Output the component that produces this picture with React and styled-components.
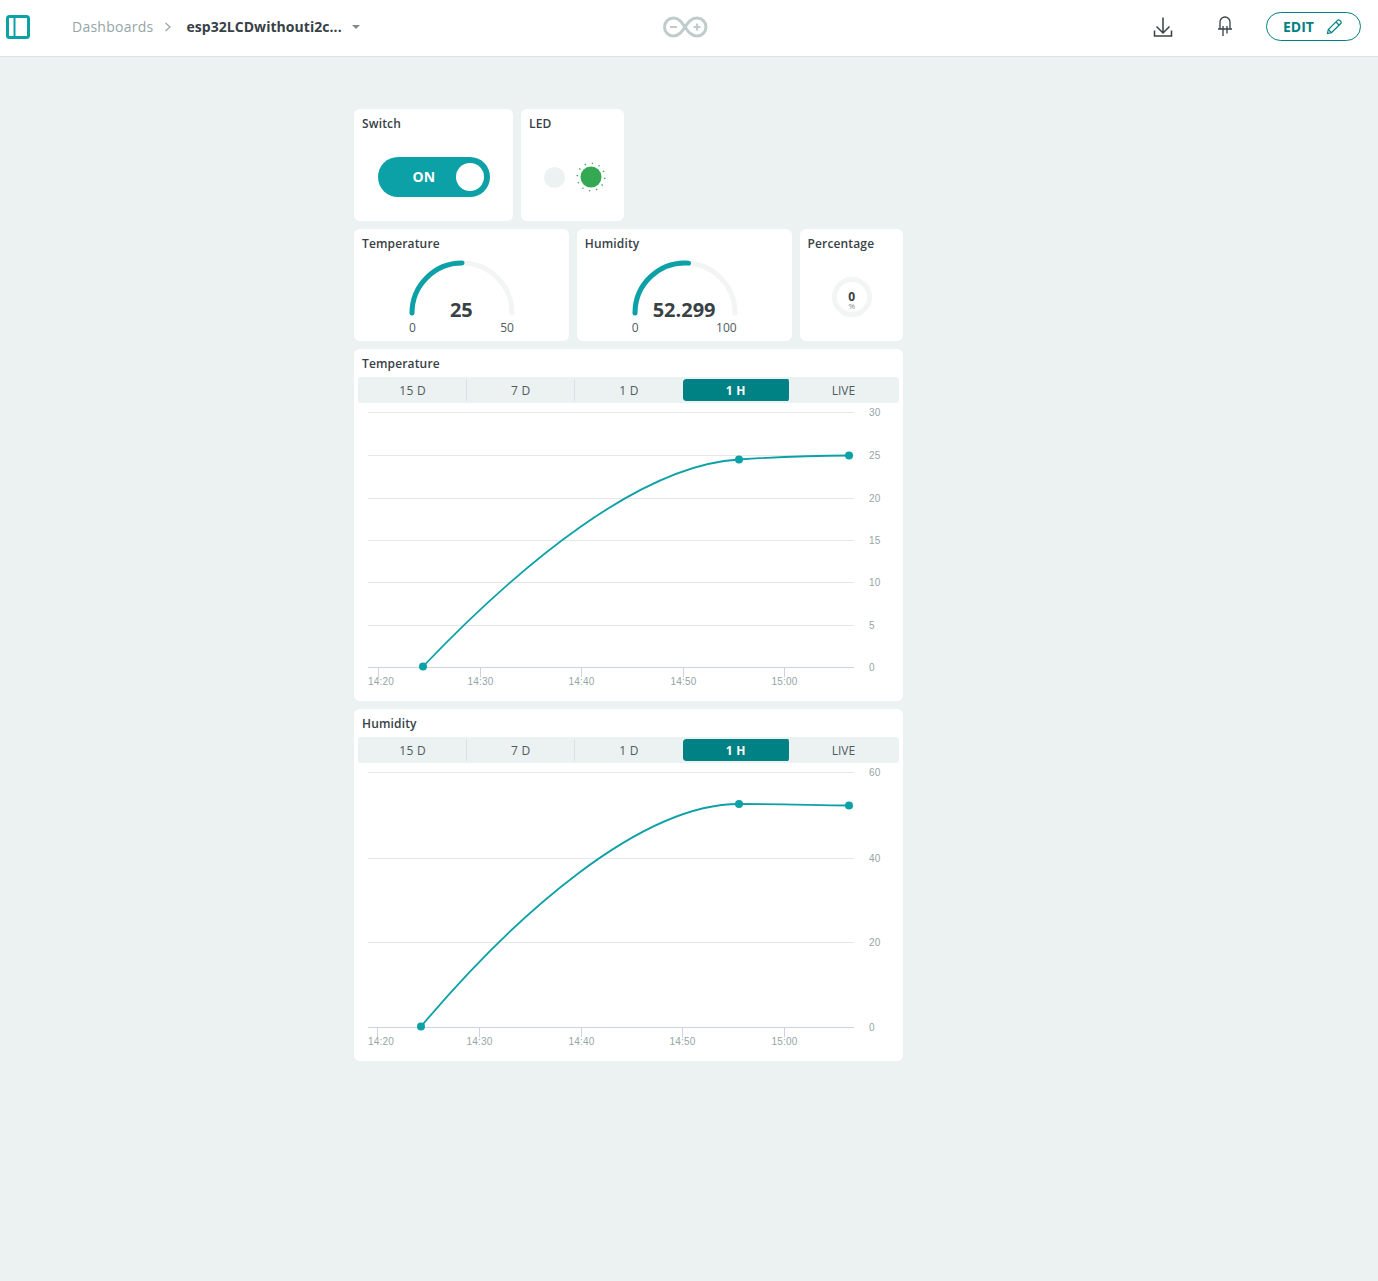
import styled, { createGlobalStyle } from "styled-components";

const teal = "#0ca1a6";
const darkTeal = "#008184";

const GlobalStyle = createGlobalStyle`
    html, body {
        margin: 0;
        padding: 0;
        background: #ecf1f1;
        font-family: "Open Sans", sans-serif;
        color: #374146;
    }
`;

const Page = styled.div`
    min-height: 1281px;
    overflow: hidden;
`;

const Header = styled.header`
    display: grid;
    grid-template-columns: 1fr auto 1fr;
    align-items: center;
    box-sizing: border-box;
    height: 57px;
    background: #fff;
    border-bottom: 1px solid #dae3e3;
    padding: 0 17px 3px 6px;
`;

const HeaderLeft = styled.div`
    display: flex;
    align-items: center;
`;

const Crumb = styled.span`
    margin-left: 42px;
    font-size: 14px;
    letter-spacing: 0.25px;
    color: #95a5a6;
`;

const CrumbCurrent = styled.span`
    margin-left: 14px;
    font-size: 14px;
    font-weight: 700;
    letter-spacing: 0.05px;
    color: #374146;
`;

const HeaderRight = styled.div`
    display: flex;
    align-items: center;
    justify-content: flex-end;
`;

const EditButton = styled.button`
    display: flex;
    align-items: center;
    justify-content: center;
    gap: 12px;
    width: 95px;
    height: 29px;
    margin-left: 33px;
    padding: 0 2px 0 0;
    background: #fff;
    border: 1px solid ${darkTeal};
    border-radius: 15px;
    color: ${darkTeal};
    font-family: inherit;
    font-size: 14px;
    font-weight: 700;
`;

const Board = styled.main`
    display: grid;
    grid-template-columns: repeat(10, 47.7px);
    grid-auto-rows: 112px;
    gap: 8px;
    padding: 52px 0 0 354px;
`;

const Card = styled.section`
    grid-column: span ${(p) => p.$cols};
    grid-row: span ${(p) => p.$rows || 1};
    position: relative;
    background: #fff;
    border-radius: 6px;
    padding: 7px 4px 0;
    display: flex;
    flex-direction: column;
    min-width: 0;
`;

const Spacer = styled.div`
    grid-column: span ${(p) => p.$cols};
`;

const Title = styled.h3`
    margin: 0 0 0 4px;
    font-size: 12px;
    line-height: 16px;
    font-weight: 600;
    letter-spacing: 0.15px;
    color: #374146;
`;

const Center = styled.div`
    flex: 1;
    display: flex;
    align-items: center;
    justify-content: center;
    padding-bottom: 16px;
`;

const Switch = styled.div`
    position: relative;
    width: 112px;
    height: 40px;
    margin: 17px 0 0 1px;
    border-radius: 20px;
    background: ${teal};
    color: #fff;
    font-size: 14px;
    font-weight: 700;
    line-height: 40px;
    padding-left: 34.5px;
    box-sizing: border-box;
`;

const Knob = styled.span`
    position: absolute;
    top: 6px;
    right: 6px;
    width: 28px;
    height: 28px;
    border-radius: 50%;
    background: #fff;
`;

const LedRow = styled.div`
    display: flex;
    align-items: center;
    gap: 6px;
    margin: 17px 0 0 5px;
`;

const LedOff = styled.span`
    width: 21px;
    height: 21px;
    margin-right: 5px;
    border-radius: 50%;
    background: #ecf1f1;
`;

const GaugeBox = styled.div`
    position: relative;
    width: 110px;
    height: 60px;
    margin: 8px auto 0;
`;

const GaugeValue = styled.div`
    position: absolute;
    left: 0;
    right: 0;
    top: 37px;
    text-align: center;
    font-size: 20px;
    line-height: 26px;
    font-weight: 700;
    color: #374146;
`;

const GaugeScale = styled.div`
    display: flex;
    justify-content: space-between;
    width: 105px;
    margin: 0 auto;
    font-size: 12px;
    line-height: 16px;
    color: #4e5b61;
`;

const Ring = styled.div`
    width: 30px;
    height: 30px;
    margin: 17px 0 0 1px;
    border: 5px solid #f3f4f4;
    border-radius: 50%;
    display: flex;
    flex-direction: column;
    align-items: center;
    justify-content: center;
`;

const RingValue = styled.span`
    font-size: 12px;
    line-height: 11px;
    font-weight: 700;
    margin-top: 6px;
`;

const RingUnit = styled.span`
    font-size: 8px;
    line-height: 8px;
    color: #7f8c8d;
`;

const Tabs = styled.div`
    display: flex;
    align-items: center;
    width: 541px;
    height: 26px;
    margin-top: 5px;
    border-radius: 3px;
    background: #ecf1f1;
`;

const Tab = styled.div`
    flex: 0 0 20%;
    height: 22px;
    line-height: 23px;
    text-align: center;
    font-size: 12px;
    letter-spacing: 0.3px;
    box-sizing: border-box;
    font-weight: ${(p) => (p.$active ? 700 : 400)};
    color: ${(p) => (p.$active ? "#fff" : "#4e5b61")};
    background: ${(p) => (p.$active ? darkTeal : "transparent")};
    background-clip: padding-box;
    border-radius: ${(p) => (p.$active ? "3px" : "0")};
    border-left: ${(p) => (p.$active ? "0" : `1px solid ${p.$line ? "#dae3e3" : "transparent"}`)};
    border-right: ${(p) => (p.$active ? "2px solid transparent" : "0")};

    &:last-child {
        padding-right: 4px;
        letter-spacing: 0;
    }
`;

const ChartSvg = styled.svg`
    display: block;
    width: 541px;
    height: 298px;
`;

const AxisText = styled.text`
    font-family: "Liberation Sans", Arial, sans-serif;
    font-size: 10px;
    letter-spacing: 0.2px;
    fill: #95a5a6;
`;

function SidebarIcon() {
    return (
        <svg width="24" height="24" viewBox="0 0 24 24" fill="none" stroke={teal}>
            <rect x="1.5" y="1.5" width="21" height="21" rx="2" strokeWidth="3" />
            <path d="M8.5 2v20" strokeWidth="2" />
        </svg>
    );
}

function Chevron() {
    return (
        <svg width="8" height="10" viewBox="0 0 8 10" fill="none" stroke="#95a5a6" strokeWidth="1.2" style={{ marginLeft: 11 }}>
            <path d="M1.5 1l4.5 4-4.5 4" />
        </svg>
    );
}

function Caret() {
    return (
        <svg width="8" height="4" viewBox="0 0 8 4" fill="#7f8c8d" style={{ marginLeft: 10 }}>
            <path d="M0 0h8L4 4z" />
        </svg>
    );
}

function ArduinoLogo() {
    return (
        <svg width="47" height="22" viewBox="0 0 47 22" fill="none" stroke="#c0cbcb" style={{ display: "block", marginLeft: 3 }}>
            <path
                d="M23 11C20 6.500 17 2 11.500 2 6.500 2 2.500 6 2.500 11s4 9 9 9c5.500 0 8.500-4.500 11.500-9 3-4.500 6-9 12-9 5 0 9 4 9 9s-4 9-9 9c-6 0-9-4.500-12-9z"
                strokeWidth="3"
            />
            <path d="M8 11h7M31.500 11h7M35 7.500v7" strokeWidth="2.200" />
        </svg>
    );
}

function DownloadIcon() {
    return (
        <svg width="20" height="20" viewBox="0 0 20 20" fill="none" stroke="#374146" strokeWidth="1.5">
            <path d="M10 .5V16M3.500 9.500L10 16l6.500-6.500M1.500 13.500V19h17v-5.500" />
        </svg>
    );
}

function LedIcon() {
    return (
        <svg width="16" height="21" viewBox="0 0 16 21" fill="none" stroke="#374146" strokeWidth="1.3" style={{ marginLeft: 44 }}>
            <path d="M3 13V6a5 5 0 0 1 10 0v7M1 13h14M6 10v10M10 10v7.500" />
        </svg>
    );
}

function PencilIcon() {
    return (
        <svg width="16" height="16" viewBox="0 0 16 16" fill="none" stroke={darkTeal} strokeWidth="1.2">
            <path d="M1.500 14.500l.8-4L11.500 1.300a1.500 1.500 0 0 1 2.100 0l1.100 1.100a1.500 1.500 0 0 1 0 2.100L5.500 13.700z" />
            <path d="M10 3l3 3M2.300 10.500l3.200 3.200" />
        </svg>
    );
}

function LedOn() {
    const rays = Array.from({ length: 12 }, (_, i) => (i * Math.PI) / 6 + 0.1);
    return (
        <svg width="30" height="30" viewBox="0 0 30 30">
            <circle cx="15" cy="15" r="10.500" fill="#34a853" />
            {rays.map((a, i) => (
                <line
                    key={i}
                    x1={15 + Math.cos(a) * 13}
                    y1={15 + Math.sin(a) * 13}
                    x2={15 + Math.cos(a) * 14.5}
                    y2={15 + Math.sin(a) * 14.5}
                    stroke="#34a853"
                    strokeWidth="1.2"
                />
            ))}
        </svg>
    );
}

function Gauge({ value, max }) {
    const r = 50;
    const cx = 56;
    const cy = 53;
    const angle = Math.PI - (value / max) * Math.PI;
    const ex = cx + r * Math.cos(angle);
    const ey = cy - r * Math.sin(angle);
    return (
        <>
            <GaugeBox>
                <svg width="110" height="60" viewBox="0 0 110 60" fill="none" strokeWidth="5" strokeLinecap="round">
                    <path d={`M${cx - r} ${cy}A${r} ${r} 0 0 1 ${cx + r} ${cy}`} stroke="#f3f4f4" />
                    <path d={`M${cx - r} ${cy}A${r} ${r} 0 0 1 ${ex} ${ey}`} stroke={teal} />
                </svg>
                <GaugeValue>{value}</GaugeValue>
            </GaugeBox>
            <GaugeScale>
                <span>0</span>
                <span>{max}</span>
            </GaugeScale>
        </>
    );
}

function Chart({ top, grid, ticks, curve, points }) {
    // viewBox uses page coordinates so the plot numbers read straight off the screenshot
    const base = grid[grid.length - 1][1];
    return (
        <ChartSvg viewBox={`358 ${top} 541 298`} fill="none">
            {grid.map(([label, y], i) => (
                <g key={label}>
                    <line x1="368" x2="854" y1={y} y2={y} stroke={i === grid.length - 1 ? "#ccd4e4" : "#e6e8e8"} />
                    <AxisText x="869" y={y + 3}>{label}</AxisText>
                </g>
            ))}
            {ticks.map(([label, x], i) => (
                <g key={label}>
                    <line x1={x} x2={x} y1={base} y2={base + 10} stroke="#ccd4e4" />
                    <AxisText x={i === 0 ? 368 : x} y={base + 17} textAnchor={i === 0 ? "start" : "middle"}>{label}</AxisText>
                </g>
            ))}
            <path d={curve} stroke={teal} strokeWidth="1.8" />
            {points.map(([x, y]) => (
                <circle key={x} cx={x} cy={y} r="4" fill={teal} />
            ))}
        </ChartSvg>
    );
}

const tabs = ["15 D", "7 D", "1 D", "1 H", "LIVE"];

function ChartCard({ title, ...chart }) {
    return (
        <Card $cols={10} $rows={3}>
            <Title>{title}</Title>
            <Tabs>
                {tabs.map((t, i) => (
                    <Tab key={t} $active={t === "1 H"} $line={i === 1 || i === 2}>{t}</Tab>
                ))}
            </Tabs>
            <Chart {...chart} />
        </Card>
    );
}

export default function App() {
    return (
        <Page>
            <GlobalStyle />
            <Header>
                <HeaderLeft>
                    <SidebarIcon />
                    <Crumb>Dashboards</Crumb>
                    <Chevron />
                    <CrumbCurrent>esp32LCDwithouti2c...</CrumbCurrent>
                    <Caret />
                </HeaderLeft>
                <ArduinoLogo />
                <HeaderRight>
                    <DownloadIcon />
                    <LedIcon />
                    <EditButton>
                        EDIT
                        <PencilIcon />
                    </EditButton>
                </HeaderRight>
            </Header>
            <Board>
                <Card $cols={3}>
                    <Title>Switch</Title>
                    <Center>
                        <Switch>ON<Knob /></Switch>
                    </Center>
                </Card>
                <Card $cols={2}>
                    <Title>LED</Title>
                    <Center>
                        <LedRow>
                            <LedOff />
                            <LedOn />
                        </LedRow>
                    </Center>
                </Card>
                <Spacer $cols={5} />
                <Card $cols={4}>
                    <Title>Temperature</Title>
                    <Gauge value={25} max={50} />
                </Card>
                <Card $cols={4}>
                    <Title>Humidity</Title>
                    <Gauge value={52.299} max={100} />
                </Card>
                <Card $cols={2}>
                    <Title>Percentage</Title>
                    <Center>
                        <Ring>
                            <RingValue>0</RingValue>
                            <RingUnit>%</RingUnit>
                        </Ring>
                    </Center>
                </Card>
                <ChartCard
                    title="Temperature"
                    top={403}
                    grid={[["30", 412.5], ["25", 455.5], ["20", 498.5], ["15", 540.5], ["10", 582.5], ["5", 625.5], ["0", 667.5]]}
                    ticks={[["14:20", 378.5], ["14:30", 480.5], ["14:40", 581.5], ["14:50", 683.5], ["15:00", 784.5]]}
                    curve="M423 666.500C520 565 640 465 739 459.500C775 457 810 455.500 849 455.500"
                    points={[[423, 666.5], [739, 459.5], [849, 455.5]]}
                />
                <ChartCard
                    title="Humidity"
                    top={763}
                    grid={[["60", 772.5], ["40", 858.5], ["20", 942.5], ["0", 1027.5]]}
                    ticks={[["14:20", 377.5], ["14:30", 479.5], ["14:40", 581.5], ["14:50", 682.5], ["15:00", 784.5]]}
                    curve="M421 1026.500C515 915 640 804 739 804C775 804 810 805 849 805.500"
                    points={[[421, 1026.5], [739, 804], [849, 805.5]]}
                />
            </Board>
        </Page>
    );
}
